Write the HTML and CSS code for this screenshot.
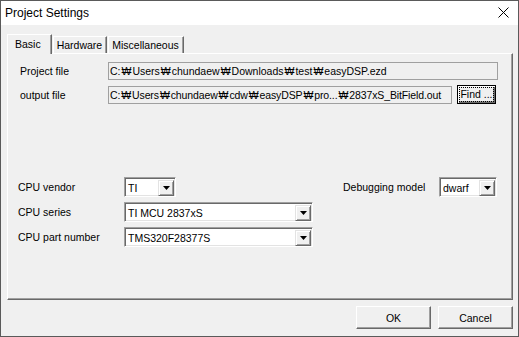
FILE: index.html
```html
<!DOCTYPE html>
<html>
<head>
<meta charset="utf-8">
<title>Project Settings</title>
<link rel="stylesheet" href="styles.css">
</head>
<body>
<div class="window">
  <div class="titlebar">
    <span class="title">Project Settings</span>
    <svg class="close" width="11" height="11" viewBox="0 0 11 11"><path d="M0.5 0.5 L10.5 10.5 M10.5 0.5 L0.5 10.5" stroke="#000" stroke-width="1" fill="none"/></svg>
  </div>
  <div class="client">
    <div class="tabs">
      <div class="tab active">Basic</div>
      <div class="tab">Hardware</div>
      <div class="tab">Miscellaneous</div>
    </div>
    <div class="panel">
      <div class="files">
        <div class="frow">
          <span class="flabel">Project file</span>
          <div class="edit full">C:<span class="w">₩</span>Users<span class="w">₩</span>chundaew<span class="w">₩</span>Downloads<span class="w">₩</span>test<span class="w">₩</span>easyDSP.ezd</div>
        </div>
        <div class="frow">
          <span class="flabel">output file</span>
          <div class="edit short">C:<span class="w">₩</span>Users<span class="w">₩</span>chundaew<span class="w">₩</span>cdw<span class="w">₩</span>easyDSP<span class="w">₩</span>pro...<span class="w">₩</span>2837xS_BitField.out</div>
          <button class="btn find"><span class="focus">Find ...</span></button>
        </div>
      </div>
      <div class="cpu">
        <div class="crow">
          <span class="clabel">CPU vendor</span>
          <div class="combo w-vendor"><span class="val">TI</span><span class="drop"><svg width="7" height="4" viewBox="0 0 7 4"><path d="M0 0 H7 L3.5 4 Z" fill="#000"/></svg></span></div>
          <span class="dlabel">Debugging model</span>
          <div class="combo w-debug"><span class="val">dwarf</span><span class="drop"><svg width="7" height="4" viewBox="0 0 7 4"><path d="M0 0 H7 L3.5 4 Z" fill="#000"/></svg></span></div>
        </div>
        <div class="crow">
          <span class="clabel">CPU series</span>
          <div class="combo w-wide"><span class="val">TI MCU 2837xS</span><span class="drop"><svg width="7" height="4" viewBox="0 0 7 4"><path d="M0 0 H7 L3.5 4 Z" fill="#000"/></svg></span></div>
        </div>
        <div class="crow">
          <span class="clabel">CPU part number</span>
          <div class="combo w-wide"><span class="val">TMS320F28377S</span><span class="drop"><svg width="7" height="4" viewBox="0 0 7 4"><path d="M0 0 H7 L3.5 4 Z" fill="#000"/></svg></span></div>
        </div>
      </div>
    </div>
    <div class="buttons">
      <button class="btn dlg">OK</button>
      <button class="btn dlg">Cancel</button>
    </div>
  </div>
</div>
</body>
</html>
```

FILE: styles.css
```css
* { box-sizing: border-box; }
html, body { margin: 0; padding: 0; }
body {
  font-family: "Liberation Sans", Arial, sans-serif;
  font-size: 10.5px;
  color: #000;
  background: #f0f0f0;
}
.window {
  width: 519px;
  height: 337px;
  border: 1px solid #5a5a5a;
  background: #f0f0f0;
  display: flex;
  flex-direction: column;
}
.titlebar {
  height: 24px;
  background: #fff;
  display: flex;
  align-items: center;
  justify-content: space-between;
  padding: 0 9px 0 4px;
  flex-shrink: 0;
}
.title { font-size: 12px; margin-top: -1px; }
.close { display: block; margin-top: -2px; }
.client {
  padding: 0 5px 0 6px;
  display: flex;
  flex-direction: column;
}
.tabs {
  display: flex;
  align-items: flex-end;
  height: 28px;
  position: relative;
  z-index: 2;
}
.tab {
  height: 17px;
  padding: 0 4px 0 3px;
  line-height: 16px;
  border-top: 1px solid #fff;
  border-left: 1px solid #fff;
  border-right: 1px solid #696969;
  box-shadow: inset -1px 0 #a0a0a0;
  background: #f0f0f0;
  white-space: nowrap;
}
.tab + .tab { margin-left: 1px; }
.tab.active {
  height: 20px;
  padding: 0 10px 0 7px;
  line-height: 18px;
  margin-bottom: -1px;
}
.panel {
  height: 247px;
  border-top: 1px solid #fff;
  border-left: 1px solid #fff;
  border-right: 1px solid #696969;
  border-bottom: 1px solid #696969;
  box-shadow: inset -1px -1px #a0a0a0;
  position: relative;
  z-index: 1;
  padding: 8px 0 0 12px;
}
.files {
  display: flex;
  flex-direction: column;
  gap: 6px;
}
.frow {
  display: flex;
  align-items: center;
  height: 18px;
}
.flabel { width: 88px; }
.edit {
  height: 18px;
  border: 1px solid #a0a0a0;
  background: #f0f0f0;
  padding-left: 1px;
  line-height: 16px;
  white-space: nowrap;
  overflow: hidden;
}
.w { padding: 0 1px; }
.edit.full { width: 390px; }
.edit.short { width: 344px; letter-spacing: -0.12px; }
.btn {
  font-family: "Liberation Sans", Arial, sans-serif;
  font-size: 10.5px;
  color: #000;
  background: #f0f0f0;
  border: 1px solid;
  border-color: #fff #696969 #696969 #fff;
  box-shadow: inset -1px -1px #a0a0a0;
  padding: 0;
  margin: 0;
}
.find {
  width: 39px;
  height: 19px;
  margin-left: 5px;
  margin-top: -1px;
  border: 1px solid #000;
  box-shadow: inset 1px 1px #fff, inset -1px -1px #696969, inset -2px -2px #a0a0a0;
  display: flex;
  align-items: center;
  justify-content: center;
}
.focus {
  display: block;
  outline: 1px dotted #000;
  outline-offset: 0;
  white-space: nowrap;
  line-height: 13px;
  width: 33px;
  height: 13px;
  text-align: center;
  overflow: visible;
}
.cpu {
  margin-top: 73px;
  margin-left: -2px;
  display: flex;
  flex-direction: column;
  gap: 5px;
}
.crow {
  display: flex;
  align-items: center;
  height: 20px;
}
.clabel { width: 106px; }
.dlabel { width: 96px; margin-left: 167px; }
.combo {
  height: 20px;
  background: #fff;
  border: 1px solid;
  border-color: #a0a0a0 #fff #fff #a0a0a0;
  box-shadow: inset 1px 1px #696969, inset -1px -1px #e3e3e3;
  display: flex;
  align-items: center;
  justify-content: space-between;
  padding: 2px 1px 1px 2px;
}
.w-vendor { width: 52px; }
.w-debug { width: 58px; }
.w-wide { width: 189px; }
.val { line-height: 16px; padding-left: 1px; }
.drop {
  width: 16px;
  height: 16px;
  background: #f0f0f0;
  border: 1px solid;
  border-color: #e3e3e3 #696969 #696969 #e3e3e3;
  box-shadow: inset 1px 1px #fff, inset -1px -1px #a0a0a0;
  display: flex;
  align-items: center;
  justify-content: center;
}
.drop svg { display: block; }
.buttons {
  display: flex;
  justify-content: flex-end;
  gap: 7px;
  margin-top: 6px;
}
.dlg {
  width: 75px;
  height: 23px;
}
```
